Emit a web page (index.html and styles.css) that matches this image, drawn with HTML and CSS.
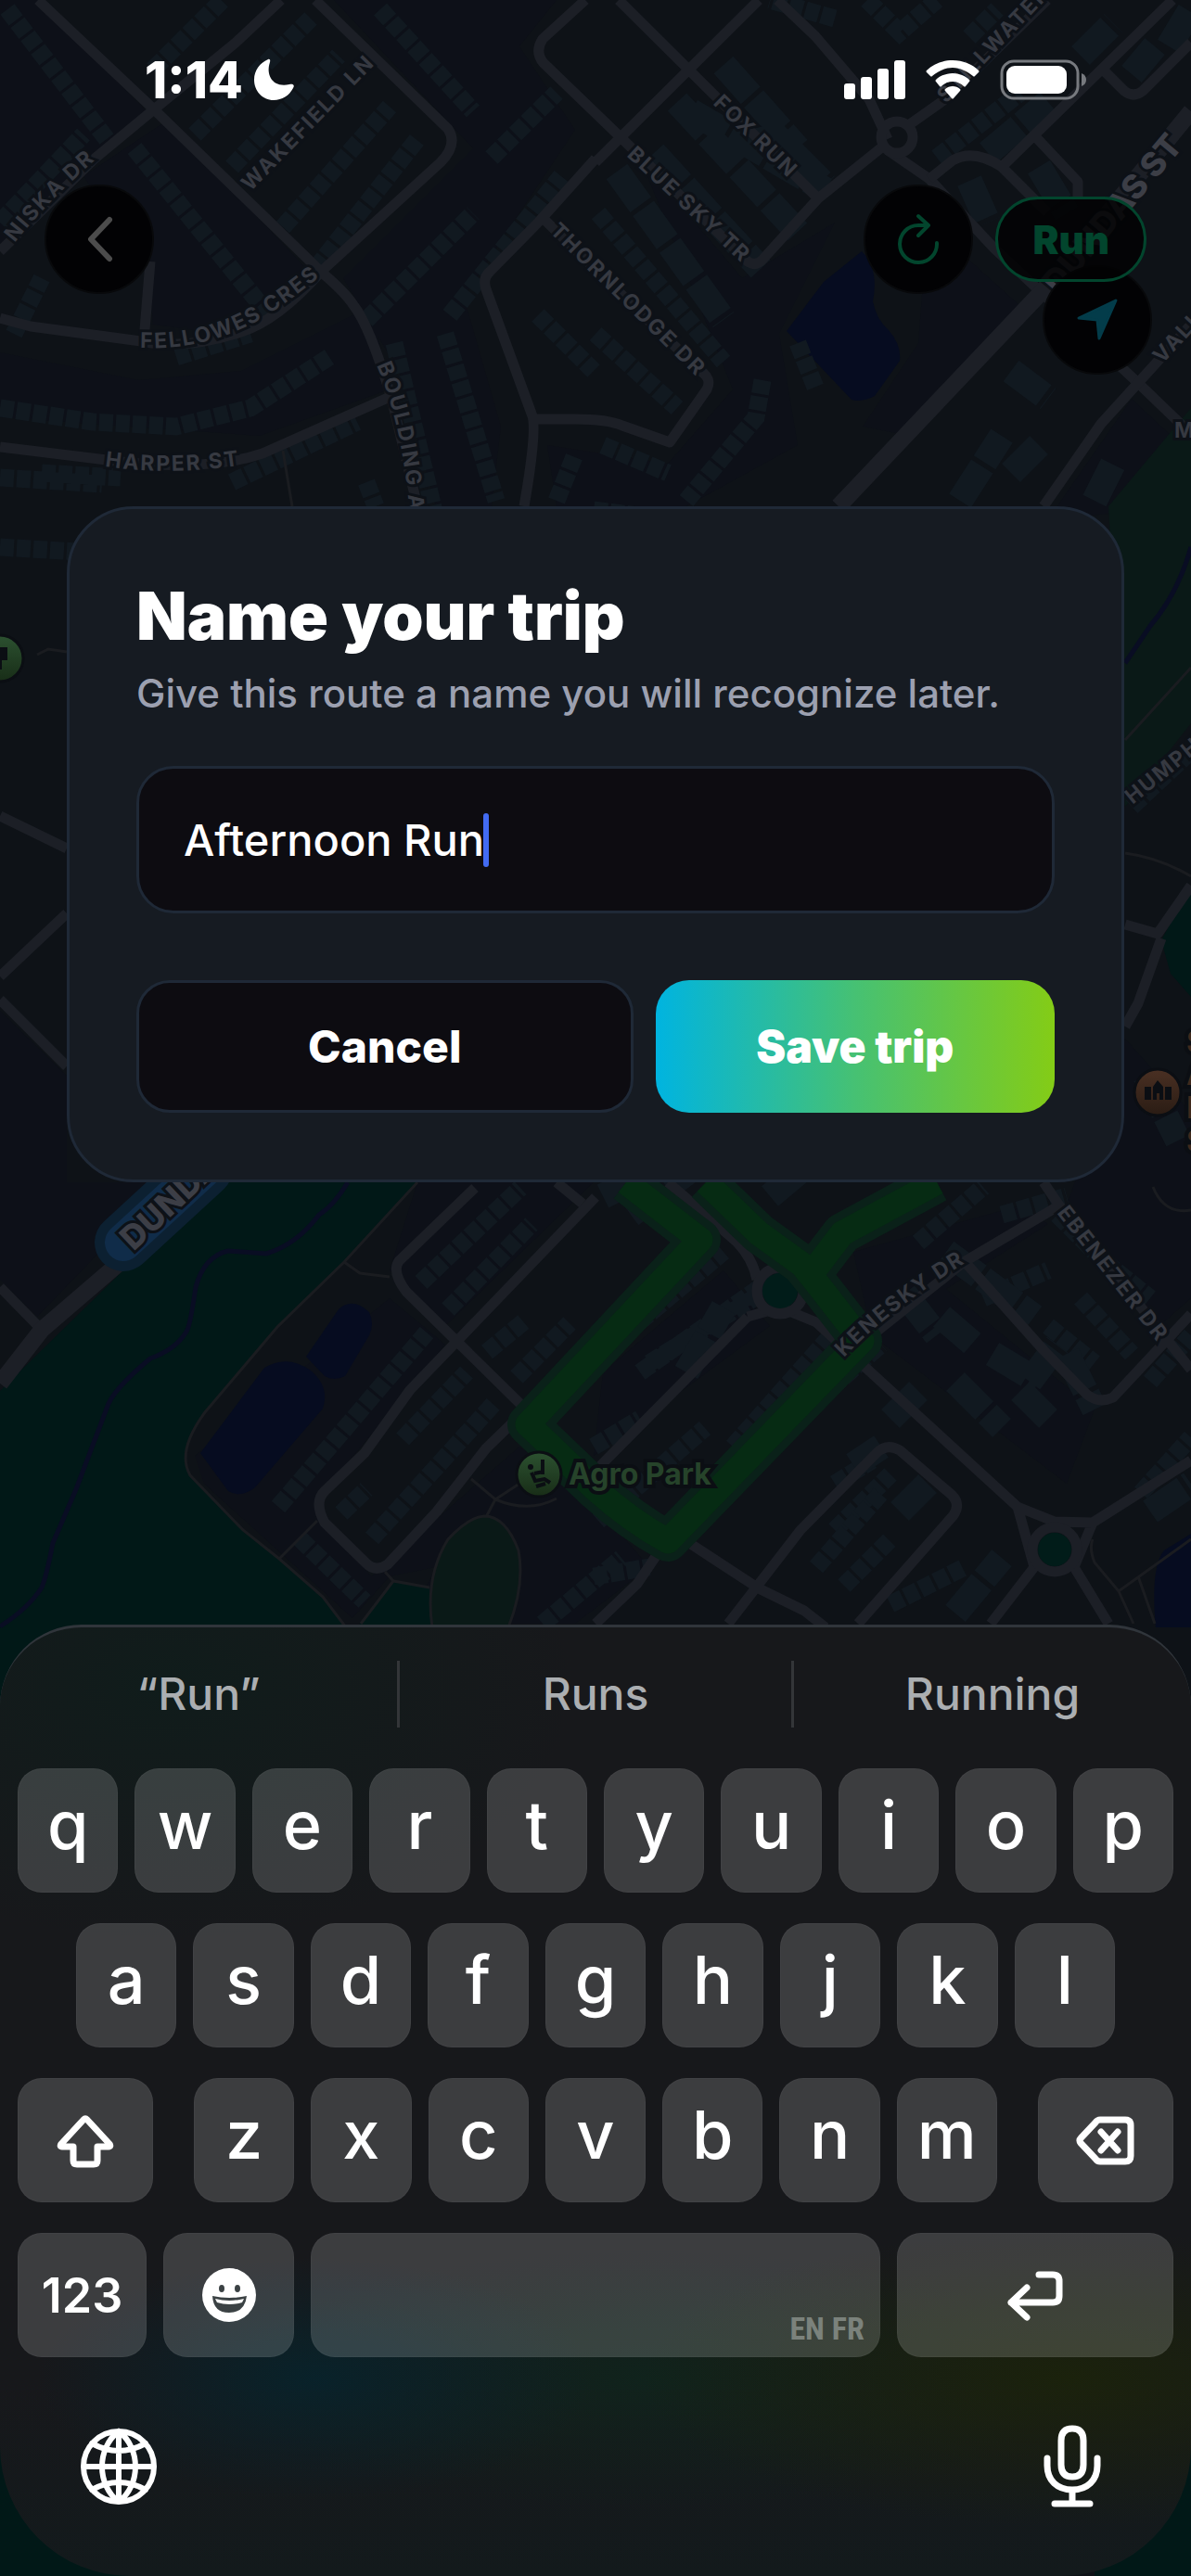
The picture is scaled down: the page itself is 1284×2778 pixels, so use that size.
FILE: index.html
```html
<!DOCTYPE html>
<html lang="en">
<head>
  <meta charset="UTF-8" />
  <meta name="viewport" content="width=device-width, initial-scale=1.0"/>
  <title>Name your trip</title>
  <link rel="stylesheet" href="styles.css">
</head>
<body>
  <div class="screen">
    <!-- dimmed map behind everything -->
    <svg class="map" viewBox="0 0 1284 2778" preserveAspectRatio="xMidYMin slice" aria-hidden="true">
      <defs>
        <linearGradient id="park-fill" x1="0" y1="0" x2="0" y2="1">
          <stop offset="0" stop-color="#2c5130"/>
          <stop offset="1" stop-color="#182d17"/>
        </linearGradient>
        <linearGradient id="school-fill" x1="0" y1="0" x2="0" y2="1">
          <stop offset="0" stop-color="#4a3023"/>
          <stop offset="1" stop-color="#2a1c14"/>
        </linearGradient>
      </defs>
      <g class="blocks">
        <path d="M0 0H40L160 122 60 220 0 270ZM180 130 340 300 240 360 165 350 160 290 90 190ZM0 380 150 410 260 400 400 330 420 420 280 470 0 450ZM360 0H600L560 50 620 140 540 260 500 320 540 460 530 546H470L430 400 370 300 510 160ZM690 170 800 300 900 240 840 360 860 480 740 546H600L590 480 720 500 790 420ZM1000 240 1100 330 980 470 930 460 990 370ZM1130 560 1220 430 1284 490V546Z"/>
        <path d="M0 1090 72 1160V1275H180L40 1420 0 1380ZM450 1275H640L480 1430 420 1370ZM210 1570 420 1400 480 1450 340 1620 400 1700 560 1560 640 1620 700 1690 620 1751H440L470 1690 420 1700 380 1745 220 1600ZM650 1480 780 1370 830 1430 640 1570ZM920 1350 1100 1300 1130 1320 1020 1390 1180 1520 1150 1600 940 1440ZM1213 1120 1284 1200V1400L1250 1430 1150 1300Z"/>
      </g>
      <path class="meadow" d="M1284 440 1195 546 1213 870 1284 780Z"/>
      <path class="wood" d="M0 1500 230 1275H450L371 1361 299 1431 221 1523Q190 1565 205 1591L262 1650 301 1681 348 1722 373 1755V2778H0Z"/>
      <path class="wood" d="M385 1755 424 1705 463 1712 466 1755ZM1284 955 1252 1014 1262 1050 1284 1075ZM1180 2600H1284V2778H1180Z"/>
      <path class="water" d="M848 357 888 304 929 271Q948 290 941 325 945 345 958 356 972 372 970 389L943 427Q930 434 918 431ZM216 1567 285 1475Q310 1460 335 1478 356 1496 348 1519L275 1604Q260 1616 246 1608ZM330 1463 365 1412Q380 1398 398 1415 404 1428 398 1440L372 1484Q360 1490 350 1484ZM1284 1654 1255 1672Q1240 1690 1246 1755H1284Z"/>
      <path class="river" d="M375 1275Q360 1300 344 1310 320 1342 287 1352L246 1349Q220 1355 211 1388 205 1430 201 1436 190 1455 162 1465 120 1500 115 1519L82 1606 57 1664Q50 1700 45 1712 30 1735 0 1754M1284 590Q1270 640 1240 675L1213 715"/>

      <!-- houses: wide dashed strokes read as rows of roofs -->
      <g class="houses">
        <path d="M8 10 115 150M165 75 240 0M0 240 90 145M145 160 290 340M210 145 335 20M250 180 365 60M305 245 420 115M340 290 450 150M15 360 45 300M190 385 270 360M0 440 100 455 190 460 270 440 355 385M395 345 510 230M425 370 470 560M480 360 535 540M485 340 605 190M0 515 110 522M45 510 130 515M250 520 385 455M0 590 200 602M230 600 290 585M395 520 405 546M410 10 510 120"/>
        <path d="M530 170 600 100M580 340 640 400M600 540 620 490M645 230 780 390M642 360 730 440M650 480 720 510M640 550 720 560M822 410 815 450 740 540M900 20 830 0M935 0 970 35 1010 0M1045 40 1075 10M860 370 880 420M1010 170 1100 100"/>
        <path d="M454 1383 561 1281M483 1412 573 1320M525 1458 565 1425M557 1485 614 1427M300 1625 460 1437M434 1552 503 1480M401 1659 532 1514M368 1632 395 1606M323 1659 393 1727M660 1450 780 1350M690 1480 845 1370M700 1470 845 1380M640 1560 690 1530M645 1640 760 1540M790 1560 905 1430M800 1580 950 1450M900 1650 960 1590M990 1340 1060 1280M1080 1310 1150 1290M1060 1400 1130 1370M1140 1310 1180 1350M1165 1400 1220 1460M1130 1430 1180 1470M1190 1360 1240 1400M1240 1490 1284 1440M1230 1610 1284 1550"/>
        <path d="M585 1751 670 1680M640 1700 700 1690M900 1600 940 1575M880 1690 950 1610M910 1710 960 1660M960 1730 1040 1690M1220 870 1284 810"/>
      </g>
      <g class="halls">
        <path d="M780 70 860 160M745 120 890 205M730 110 860 250M705 165 820 290M665 185 780 345M820 130 890 200M1045 195 1065 240M1065 165 1130 110M1120 180 1150 230M1165 60 1200 25M1220 80 1245 50M1090 400 1130 430M1035 540 1080 470M1180 540 1200 500M1120 480 1090 510M1260 50 1284 10"/>
        <path d="M650 1290 690 1270M680 1310 760 1250M830 1290 890 1240M740 1480 780 1410M1020 1350 1115 1420M975 1395 1010 1440M1015 1420 1050 1450M1070 1460 1120 1490M1030 1490 1080 1540M920 1580 950 1560M1110 1490 1140 1450M1150 1460 1180 1520M1100 1500 1130 1530M960 1530 990 1500M970 1630 1000 1600M1030 1740 1080 1680M1240 1630 1284 1600M1235 1160 1270 1230"/>
      </g>

      <g class="roads">
        <path d="M41 0 166 118 346 293Q372 315 381 329 398 350 422 429L450 546M303 0 254 46 166 118 102 171 0 271M340 0 483 139Q494 156 475 175L346 293Q300 345 260 358 200 378 152 368L33 352 0 343M162 282 155 368M0 482 115 496Q220 510 283 489L418 429"/>
        <path d="M642 171 581 239 528 293Q520 300 524 312L573 446Q580 460 565 546M573 452H620Q655 452 671 459L722 477 762 420Q768 408 755 400L586 236M631 0 585 42Q576 56 586 68L669 148 806 282Q815 288 822 280L882 214 953 157M667 0 882 214M818 0 642 175M838 0 879 39 937 107 957 150M957 162 1002 193 1072 268 1228 414 1284 468M978 136 1019 107 1129 0"/>
        <path d="M1264 0 1080 180Q1050 160 1027 173L1002 193M1189 75 1212 98Q1222 106 1232 98L1284 46M1115 146 1162 196V215M1080 180 1129 229M1125 546 1187 457 1284 350"/>
        <path d="M0 880 72 915M72 985 0 1053M0 1078 72 1150M0 1388 45 1434M512 1281 430 1360Q422 1372 438 1393L561 1514M642 1291 442 1499 393 1567 350 1608Q338 1620 350 1642L395 1686Q405 1696 418 1687L471 1630 524 1562 557 1530"/>
        <path d="M720 1275 794 1339Q812 1358 816 1380M806 1420 642 1586M806 1420 841 1410 880 1426 1097 1625 1137 1641 1178 1642 1284 1575M940 1440 1039 1361 1142 1300 1125 1275M1043 1364 1125 1456 1172 1504Q1185 1514 1200 1507L1284 1417M1142 1300 1284 1477M600 1275 628 1298M785 1751 863 1650 945 1567Q956 1556 970 1564L1026 1612Q1036 1622 1028 1634L925 1751M740 1662 818 1713 867 1737 890 1755M716 1665 687 1708 642 1751M1068 1751 1115 1690 1097 1625M1195 1751 1158 1690 1178 1642M1213 997 1248 1007 1284 955M1252 1012 1227 1082 1213 1107"/>
        <circle cx="967" cy="148" r="17"/>
        <circle cx="841" cy="1392" r="25"/>
        <circle cx="1137" cy="1671" r="24"/>
      </g>
      <path class="avenue" d="M904 546 1137 300 1284 120M0 1492 45 1434 230 1275"/>
      <path class="trail" d="M305 486 315 546M40 706 52 700 72 703M450 1275 371 1361 299 1431 221 1523Q190 1565 205 1591L262 1650 301 1681 348 1722 373 1755M371 1361 388 1373 420 1377M301 1681 342 1640M389 1751 424 1705 463 1712M415 1695 424 1705M508 1595 534 1617Q570 1632 600 1616M534 1617 524 1636M534 1617 560 1600M1178 1660Q1174 1670 1180 1685L1206 1716 1284 1660M1206 1716 1222 1751M1227 1700 1245 1751M1284 720 1213 798M1213 920Q1250 925 1284 945M1243 1280Q1255 1310 1284 1305"/>
      <path class="meadow trail" d="M522 1635Q545 1635 559 1672 566 1710 548 1755H466Q458 1700 483 1660 505 1636 522 1635Z"/>
      <circle class="island" cx="841" cy="1392" r="19"/>
      <circle class="island" cx="1137" cy="1671" r="18"/>

      <g class="route">
        <path class="route-halo" d="M675 1275 755 1337 569 1536 642 1606Q680 1640 720 1662L929 1446 884 1388 865 1364 818 1330 761 1275M876 1372 908 1330 1010 1275"/>
        <path class="route-core" d="M675 1275 755 1337 569 1536 642 1606Q680 1640 720 1662L929 1446 884 1388 865 1364 818 1330 761 1275M876 1372 908 1330 1010 1275"/>
      </g>
      <path class="tunnel-halo" d="M133 1340 220 1260"/>
      <path class="tunnel-core" d="M133 1340 220 1260"/>

      <defs>
        <path id="niska" d="M16 262 Q60 206 130 150"/>
        <path id="wakefield" d="M270 207 430 43"/>
        <path id="fellowes" d="M151 375Q215 378 270 350 310 330 380 268"/>
        <path id="harper" d="M113 503Q200 516 300 494"/>
        <path id="boulding" d="M406 394Q440 470 444 600"/>
        <path id="thornlodge" d="M592 250 785 440"/>
        <path id="bluesky" d="M675 168 830 312"/>
        <path id="fox" d="M768 112 880 222"/>
        <path id="stillwater" d="M1020 112 1170 -45"/>
        <path id="dundas" d="M1141 319 1340 82"/>
        <path id="dundas2" d="M144 1350 280 1222"/>
        <path id="valley" d="M1253 393 1330 310"/>
        <path id="humph" d="M1221 868 1310 795"/>
        <path id="kenesky" d="M910 1464Q960 1410 1060 1350"/>
        <path id="ebenezer" d="M1139 1308 1262 1466"/>
      </defs>
      <g class="street-names">
        <text><textPath href="#niska">NISKA DR</textPath></text>
        <text><textPath href="#wakefield">WAKEFIELD LN</textPath></text>
        <text><textPath href="#fellowes">FELLOWES CRES</textPath></text>
        <text><textPath href="#harper">HARPER ST</textPath></text>
        <text><textPath href="#boulding">BOULDING A</textPath></text>
        <text><textPath href="#thornlodge">THORNLODGE DR</textPath></text>
        <text><textPath href="#bluesky">BLUE SKY TR</textPath></text>
        <text><textPath href="#fox">FOX RUN</textPath></text>
        <text><textPath href="#stillwater">STILLWATER</textPath></text>
        <text><textPath href="#valley">VALL</textPath></text>
        <text><textPath href="#humph">HUMPH</textPath></text>
        <text><textPath href="#kenesky">KENESKY DR</textPath></text>
        <text><textPath href="#ebenezer">EBENEZER DR</textPath></text>
        <text x="1266" y="472">M</text>
        <text class="major"><textPath href="#dundas">DUNDAS ST</textPath></text>
        <text class="major"><textPath href="#dundas2">DUNDA</textPath></text>
      </g>

      <g class="pin pin-park">
        <circle cx="0" cy="710" r="25"/>
        <circle cx="581" cy="1590" r="24"/>
        <text x="613" y="1601">Agro Park</text>
        <path class="pin-mark" d="M-6 698H8V712H2V722H-4V712H-8Z"/>
        <circle class="pin-mark" cx="572" cy="1582" r="3"/>
        <path class="pin-line" d="M573 1588 577 1597 587 1595 593 1599M576 1589 586 1587M585 1574V1590M578 1603 588 1600"/>
      </g>
      <g class="pin pin-school">
        <circle cx="1248" cy="1178" r="25"/>
        <path class="pin-mark" d="M1243 1186V1172L1248 1165 1254 1172V1186H1250V1179H1247V1186ZM1234 1172H1241V1186H1234ZM1256 1172H1263V1186H1256Z"/>
        <text x="1279" y="1135">S</text>
        <text x="1279" y="1170">A</text>
        <text x="1279" y="1206">E</text>
        <text x="1279" y="1242">S</text>
      </g>
    </svg>

    <header class="status-bar">
      <div class="clock">
        <span>1:14</span>
        <svg width="46" height="46" viewBox="0 0 46 46" aria-hidden="true"><path d="M17 1C18 0 20 1 19 4C14 19 23 32 40 28C44 27 46 29 44 32C40 40 32 45 23 45C11 45 2 35 2 23C2 13 8 5 17 1Z"/></svg>
      </div>
      <div class="signals">
        <svg width="66" height="44" viewBox="0 0 66 44" aria-hidden="true"><rect y="26" width="12" height="17" rx="3"/><rect x="18" y="19" width="12" height="24" rx="3"/><rect x="36" y="10" width="12" height="33" rx="3"/><rect x="54" y="1" width="12" height="42" rx="3"/></svg>
        <svg width="58" height="44" viewBox="0 0 58 44" aria-hidden="true"><path d="M29 1C40 1 50 5 57 12Q58 13 57 14L53 18Q52 19 51 18C45 13 37 9 29 9S13 13 7 18Q6 19 5 18L1 14Q0 13 1 12C8 5 18 1 29 1ZM29 15C36 15 43 18 47 22Q48 23 47 24L43 29Q42 30 41 29C38 26 34 24 29 24S20 26 17 29Q16 30 15 29L11 24Q10 23 11 22C15 18 22 15 29 15ZM29 29C32 29 35 30 37 32Q38 33 37 34L30 42Q29 43 28 42L21 34Q20 33 21 32C23 30 26 29 29 29Z"/></svg>
        <svg width="94" height="44" viewBox="0 0 94 44" aria-hidden="true"><rect class="battery-shell" x="2" y="2" width="82" height="40" rx="13"/><path class="battery-tip" d="M88 15Q93 17 93 22T88 29Z"/><rect x="7" y="7" width="65" height="30" rx="9"/></svg>
      </div>
    </header>

    <nav class="map-controls">
      <button class="round-button" type="button" aria-label="Back">
        <svg width="60" height="60" viewBox="0 0 60 60"><path class="icon-back" d="M41 9 21 30 41 51"/></svg>
      </button>
      <button class="round-button refresh" type="button" aria-label="Refresh">
        <svg width="60" height="60" viewBox="0 0 60 60"><path class="icon-refresh" d="M50 34A20 20 0 1 1 30 15H40M30 5 41 15 30 26"/></svg>
      </button>
      <button class="mode-pill" type="button">Run</button>
      <button class="round-button locate" type="button" aria-label="Locate me">
        <svg width="60" height="60" viewBox="0 0 60 60"><path class="icon-locate" d="M50 9 10 28 30 30 32 50Z"/></svg>
      </button>
    </nav>

    <form class="dialog" onsubmit="return false">
      <h1>Name your trip</h1>
      <label for="trip-name">Give this route a name you will recognize later.</label>
      <div class="field">
        <input id="trip-name" type="text" value="Afternoon Run" />
        <span class="caret"></span>
      </div>
      <div class="actions">
        <button class="cancel" type="button">Cancel</button>
        <button class="save" type="submit">Save trip</button>
      </div>
    </form>

    <section class="keyboard">
      <div class="suggestions">
        <button type="button">“Run”</button>
        <button type="button">Runs</button>
        <button type="button">Running</button>
      </div>
      <div class="keys">
        <div class="key-row">
          <button type="button">q</button><button type="button">w</button><button type="button">e</button><button type="button">r</button><button type="button">t</button><button type="button">y</button><button type="button">u</button><button type="button">i</button><button type="button">o</button><button type="button">p</button>
        </div>
        <div class="key-row key-row-inset">
          <button type="button">a</button><button type="button">s</button><button type="button">d</button><button type="button">f</button><button type="button">g</button><button type="button">h</button><button type="button">j</button><button type="button">k</button><button type="button">l</button>
        </div>
        <div class="key-row key-row-shift">
          <button class="key-side" type="button" aria-label="Shift">
            <svg width="64" height="60" viewBox="0 0 64 60"><path class="icon-line" d="M30 8Q32 6 34 8L58 34Q60 37 57 37H45V52Q45 56 41 56H23Q19 56 19 52V37H7Q4 37 6 34Z"/></svg>
          </button>
          <div class="key-row letters">
            <button type="button">z</button><button type="button">x</button><button type="button">c</button><button type="button">v</button><button type="button">b</button><button type="button">n</button><button type="button">m</button>
          </div>
          <button class="key-side" type="button" aria-label="Delete">
            <svg width="64" height="60" viewBox="0 0 64 60"><path class="icon-line" d="M26 8H53Q59 8 59 14V47Q59 53 53 53H26Q23 53 21 50L5 33Q3 30 5 28L21 11Q23 8 26 8ZM27 21 45 41M45 21 27 41"/></svg>
          </button>
        </div>
        <div class="key-row key-row-bottom">
          <button class="key-numbers" type="button">123</button>
          <button type="button" aria-label="Emoji">
            <svg width="60" height="60" viewBox="0 0 60 60"><circle class="icon-fill" cx="30" cy="30" r="29"/><ellipse class="icon-hole" cx="22" cy="23" rx="3" ry="4"/><ellipse class="icon-hole" cx="39" cy="23" rx="3" ry="4"/><path class="icon-hole" d="M12 31Q30 35 49 31Q47 49 30 49T12 31Z"/><path class="icon-fill" d="M15 34Q30 38 46 34L44 38Q30 42 17 38Z"/></svg>
          </button>
          <button class="key-space" type="button" aria-label="Space">EN FR</button>
          <button type="button" aria-label="Return">
            <svg width="64" height="60" viewBox="0 0 64 60"><path class="icon-line" d="M36 8H51Q58 8 58 15V31Q58 38 51 38H6M23 22 6 38 23 54"/></svg>
          </button>
        </div>
      </div>
      <div class="keyboard-footer">
        <button type="button" aria-label="Next keyboard">
          <svg width="84" height="84" viewBox="0 0 84 84"><path class="icon-globe" d="M42 4A38 38 0 1 0 42 80A38 38 0 1 0 42 4ZM42 4V80M4 42H80M42 4C18 22 18 62 42 80C66 62 66 22 42 4M13 17Q42 33 71 17M13 67Q42 51 71 67"/></svg>
        </button>
        <button type="button" aria-label="Dictate">
          <svg width="84" height="90" viewBox="0 0 84 90"><path class="icon-mic" d="M42 4Q54 4 54 17V43Q54 56 42 56T30 43V17Q30 4 42 4ZM15 36V44C15 60 26 70 42 70S69 60 69 44V36M42 70V85M23 85H61"/></svg>
        </button>
      </div>
    </section>
  </div>
</body>
</html>
```
FILE: styles.css
```css
* {
  box-sizing: border-box;
}
body {
  margin: 0;
  background: #0e1217;
  color: white;
  font-family: Inter, Roboto, sans-serif;
}
button, input {
  font-family: inherit;
  color: inherit;
  margin: 0;
}
button {
  display: flex;
  align-items: center;
  justify-content: center;
  padding: 0;
  border: 0;
  background: none;
  cursor: pointer;
}
.screen {
  position: relative;
  display: flex;
  flex-direction: column;
  min-height: 100vh;
  overflow: hidden;
}

/* map */
.map {
  position: absolute;
  inset: 0;
  width: 100%;
  height: 100%;
}
.blocks {
  fill: #0d1018;
}
.meadow {
  fill: #0a1917;
}
.wood {
  fill: #011817;
}
.water {
  fill: #060c20;
}
.river {
  fill: none;
  stroke: #090d23;
  stroke-width: 5;
}
.houses path, .halls path {
  fill: none;
  stroke: #111920;
  stroke-width: 19;
  stroke-dasharray: 15 3;
}
.halls path {
  stroke-width: 28;
  stroke-dasharray: 44 5;
}
.roads, .avenue {
  fill: none;
  stroke: #1c1f26;
  stroke-width: 11;
  stroke-linejoin: round;
}
.avenue {
  stroke-width: 18;
}
.trail {
  fill: none;
  stroke: #1a1c20;
  stroke-width: 3;
}
.meadow.trail {
  fill: #0a1917;
}
.island {
  fill: #011c19;
}
.route path {
  fill: none;
  stroke-linejoin: round;
}
.route .route-halo {
  stroke: #0a2119;
  stroke-width: 44;
}
.route .route-core {
  stroke: #062b13;
  stroke-width: 27;
}
.tunnel-halo, .tunnel-core {
  stroke: #0c2031;
  stroke-width: 62;
  stroke-linecap: round;
}
.tunnel-core {
  stroke: #102c49;
  stroke-width: 40;
}
.street-names {
  fill: #363941;
  stroke: #0d1117;
  stroke-width: 6;
  paint-order: stroke;
  font-size: 23px;
  font-weight: 700;
  letter-spacing: 2px;
}
.street-names .major {
  fill: #3c3e46;
  font-size: 36px;
  font-weight: 800;
  letter-spacing: 0;
}
.pin circle {
  stroke: #0b0e13;
  stroke-width: 3;
}
.pin text {
  stroke: #0b0e13;
  stroke-width: 8;
  paint-order: stroke;
  font-size: 32px;
  font-weight: 700;
}
.pin-park {
  fill: #26432a;
}
.pin-park circle {
  fill: url(#park-fill);
}
.pin-school {
  fill: #3f291c;
}
.pin-school circle {
  fill: url(#school-fill);
}
.pin .pin-mark {
  fill: #0b0e13;
  stroke: none;
}
.pin-line {
  fill: none;
  stroke: #0b0e13;
  stroke-width: 4;
}

/* status bar */
.status-bar {
  position: relative;
  display: flex;
  justify-content: space-between;
  align-items: center;
  height: 171px;
  padding: 0 112px 0 156px;
}
.clock, .signals {
  display: flex;
  align-items: center;
  fill: white;
}
.clock {
  gap: 10px;
  font-size: 55px;
  font-weight: 800;
}
.signals {
  gap: 22px;
}
.battery-shell {
  fill: none;
  stroke: #777a7f;
  stroke-width: 3;
}
.battery-tip {
  fill: #777a7f;
}

/* buttons over the map */
.map-controls {
  position: relative;
  display: flex;
  align-items: center;
  gap: 24px;
  padding: 28px 48px 0;
}
.round-button {
  width: 118px;
  height: 118px;
  border: 2px solid #08090b;
  border-radius: 50%;
  background: #020204;
}
.round-button svg {
  fill: none;
  stroke-linecap: round;
  stroke-linejoin: round;
}
.refresh {
  margin-left: auto;
}
.locate {
  position: absolute;
  top: 115px;
  right: 42px;
}
.mode-pill {
  position: relative;
  z-index: 1;
  height: 92px;
  padding: 0 37px;
  border: 3px solid #02452d;
  border-radius: 46px;
  background: rgba(2, 2, 4, 0.85);
  color: #02452d;
  font-size: 42px;
  font-weight: 900;
}
.icon-back {
  stroke: #4c4c4c;
  stroke-width: 6;
}
.icon-refresh {
  stroke: #02452d;
  stroke-width: 4;
}
.icon-locate {
  fill: #033c4a;
  stroke: #033c4a;
  stroke-width: 3;
}

/* dialog */
.dialog {
  position: relative;
  display: flex;
  flex-direction: column;
  margin: 229px 72px 0;
  padding: 72px;
  border: 3px solid #1f2937;
  border-radius: 72px;
  background: #161b22;
}
.dialog h1 {
  margin: 0 0 14px;
  font-size: 71px;
  font-weight: 900;
  line-height: 86px;
}
.dialog label {
  color: #9ca0b0;
  font-size: 42px;
  font-weight: 500;
  line-height: 54px;
}
.field {
  position: relative;
  margin: 51px 0 72px;
}
.field input {
  display: block;
  width: 100%;
  height: 159px;
  padding: 0 48px;
  border: 3px solid #1f2937;
  border-radius: 40px;
  outline: 0;
  background: #0d0c11;
  font-size: 47px;
  font-weight: 500;
}
.caret {
  position: absolute;
  top: 51px;
  left: 374px;
  width: 6px;
  height: 58px;
  border-radius: 3px;
  background: #426bf2;
}
.actions {
  display: flex;
  gap: 24px;
}
.actions button {
  height: 143px;
  border-radius: 36px;
  font-size: 48px;
  font-weight: 800;
}
.actions .cancel {
  flex: 16;
  border: 3px solid #1f2937;
  background: #0d0c11;
}
.actions .save {
  flex: 13;
  background: linear-gradient(90deg, #00b4e0, #46c173 50%, #84cc16);
  font-weight: 900;
}

/* keyboard */
.keyboard {
  position: relative;
  margin-top: auto;
  padding: 0 19px;
  border-top: 3px solid #30353b;
  border-radius: 88px 88px 140px 140px;
  background:
    radial-gradient(ellipse 300px 130px at 340px 810px, #09222a, transparent),
    radial-gradient(ellipse 460px 160px at 1150px 810px, #1b220c, transparent),
    radial-gradient(ellipse 460px 140px at 700px 810px, #10231c, transparent),
    radial-gradient(ellipse 440px 280px at 180px 60px, #101c1b, transparent),
    linear-gradient(#17181b 80%, #131a1c);
}
.suggestions {
  display: grid;
  grid-template-columns: repeat(3, 1fr);
  align-items: center;
  height: 144px;
  margin: 0 -19px 8px;
}
.suggestions button {
  height: 72px;
  padding-bottom: 2px;
  color: #abaeb1;
  font-size: 48px;
  font-weight: 500;
}
.suggestions button:nth-child(2) {
  border: solid #333538;
  border-width: 0 3px;
}
.keys {
  display: flex;
  flex-direction: column;
  gap: 33px;
}
.key-row {
  display: flex;
  gap: 18px;
}
.key-row button {
  flex: 1;
  height: 134px;
  padding: 0 0 14px;
  border: 1px solid rgba(255, 255, 255, 0.03);
  border-radius: 26px;
  background: rgba(255, 255, 255, 0.16);
  font-size: 72px;
  font-weight: 500;
}
.key-row-inset {
  padding: 0 63px;
}
.key-row-shift {
  gap: 44px;
}
.letters {
  flex: 1;
}
.key-row .key-side {
  flex: 0 0 146px;
  padding: 0;
}
.key-row-bottom {
  display: grid;
  grid-template-columns: 139fr 141fr 613fr 298fr;
}
.key-row-bottom button {
  padding: 0;
}
.key-row .key-numbers {
  font-size: 52px;
  font-weight: 600;
}
.key-row .key-space {
  align-items: flex-end;
  justify-content: flex-end;
  padding: 0 16px 10px;
  color: #7b827c;
  font-family: "Liberation Sans Narrow", "Roboto Condensed", Roboto, sans-serif;
  font-size: 34px;
  font-weight: 700;
}
.keyboard-footer {
  display: flex;
  justify-content: space-between;
  align-items: center;
  height: 236px;
  padding: 0 67px;
}
.icon-line, .icon-mic, .icon-globe {
  fill: none;
  stroke: white;
  stroke-width: 7;
  stroke-linecap: round;
  stroke-linejoin: round;
}
.icon-globe {
  stroke-width: 6;
}
.icon-fill {
  fill: white;
}
.icon-hole {
  fill: #3b4244;
}
```
